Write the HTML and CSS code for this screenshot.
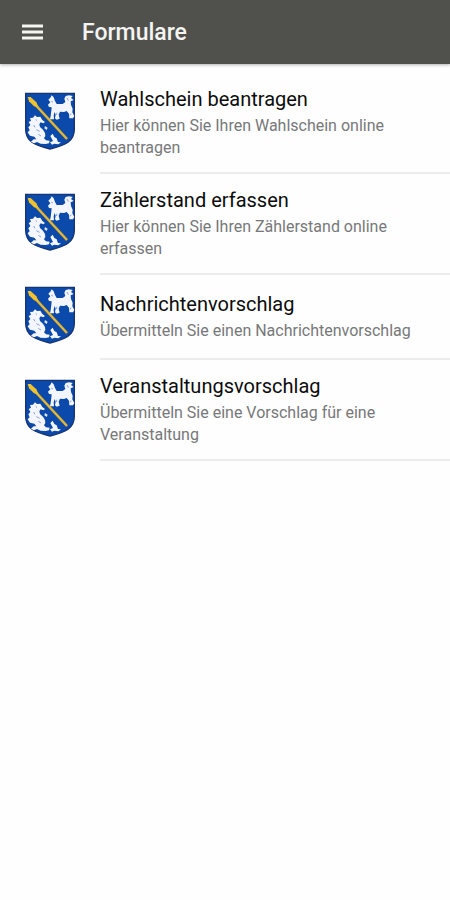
FILE: index.html
```html
<!DOCTYPE html>
<html lang="de">
<head>
    <meta charset="UTF-8">
    <meta name="viewport" content="width=device-width, initial-scale=1.0">
    <title>Formulare</title>
    <link rel="stylesheet" href="styles.css">
</head>
<body>
    <svg class="sprite" aria-hidden="true">
        <symbol id="wappen" viewBox="0 0 150 174">
            <path d="M2 4H148V112C148 148 122 160 75 171C28 160 2 148 2 112Z" fill="#0b49ab" stroke="#173573" stroke-width="4"/>
            <path d="M18 24L126 141" stroke="#5a6a62" stroke-width="9"/>
            <path d="M18 24L126 141" stroke="#e3b93c" stroke-width="6"/>
            <path d="M8 15L17 15L34 31L41 46L27 43L12 28Z" fill="#f0c22e"/>
            <!-- Hund -->
            <path d="M76 17L80 10L86 16L90 27L95 36L113 36L121 30L118 20L122 12L132 10L143 12L138 18L146 24L137 28L138 39L143 50L142 61L148 72L144 79L133 79L132 65L125 57L117 60L105 59L101 68L104 80L95 83L90 79L92 68L89 60L86 70L87 82L75 82L77 72L79 56L80 46L72 45L69 38L76 31L70 23Z" fill="#f3f5ff"/>
            <path d="M79 28L84 30M126 18L130 26M96 62L94 69M138 65L136 70" stroke="#8ba4da" stroke-width="3"/>
            <!-- Seepferd -->
            <path d="M15 78L24 77L30 70L36 75L46 74L52 84L60 90L55 94L47 91L43 97L45 105L54 113L60 123L61 132L57 139L63 145L74 146L72 154L62 156L47 155L36 150L27 154L18 149L26 142L34 142L28 134L15 131L8 121L14 115L10 106L16 99L11 90L18 86Z" fill="#f3f5ff"/>
            <path d="M76 132L83 125L88 135L95 139L99 150L108 151L100 157L88 155L81 158L75 151L84 147Z" fill="#f3f5ff"/>
            <path d="M60 102L68 107L65 114L58 109Z" fill="#dfe6fa"/>
            <path d="M32 82L36 86M26 99L30 106M34 113L44 118M40 127L48 132" fill="none" stroke="#8ba4da" stroke-width="3"/>
        </symbol>
    </svg>

    <header class="toolbar">
        <button class="menu-btn" type="button" aria-label="Menü">
            <svg viewBox="0 0 22 16" width="22" height="16">
                <path d="M0 2H21M0 8H21M0 14H21" stroke="#f4f4f2" stroke-width="3"/>
            </svg>
        </button>
        <h1>Formulare</h1>
    </header>

    <main>
        <ul class="form-list">
            <li>
                <a class="form-item" href="#wahlschein">
                    <svg class="crest" aria-hidden="true"><use href="#wappen"/></svg>
                    <div class="form-text">
                        <h2>Wahlschein beantragen</h2>
                        <p>Hier können Sie Ihren Wahlschein online beantragen</p>
                    </div>
                </a>
            </li>
            <li>
                <a class="form-item" href="#zaehlerstand">
                    <svg class="crest" aria-hidden="true"><use href="#wappen"/></svg>
                    <div class="form-text">
                        <h2>Zählerstand erfassen</h2>
                        <p>Hier können Sie Ihren Zählerstand online erfassen</p>
                    </div>
                </a>
            </li>
            <li>
                <a class="form-item" href="#nachricht">
                    <svg class="crest" aria-hidden="true"><use href="#wappen"/></svg>
                    <div class="form-text">
                        <h2>Nachrichtenvorschlag</h2>
                        <p>Übermitteln Sie einen Nachrichtenvorschlag</p>
                    </div>
                </a>
            </li>
            <li>
                <a class="form-item" href="#veranstaltung">
                    <svg class="crest" aria-hidden="true"><use href="#wappen"/></svg>
                    <div class="form-text">
                        <h2>Veranstaltungsvorschlag</h2>
                        <p>Übermitteln Sie eine Vorschlag für eine Veranstaltung</p>
                    </div>
                </a>
            </li>
        </ul>
    </main>
</body>
</html>
```
FILE: styles.css
```css
* {
    margin: 0;
    padding: 0;
    box-sizing: border-box;
}

body {
    font-family: Roboto, "Liberation Sans", sans-serif;
    background: #fefefe;
    color: #0c0c0c;
}

.sprite {
    display: none;
}

.toolbar {
    display: flex;
    align-items: center;
    gap: 38px;
    height: 64px;
    padding: 0 22px;
    background: #50514d;
    box-shadow: 0 1px 3px rgba(0, 0, 0, 0.3);
}

.toolbar h1 {
    padding-top: 2px;
    color: #f4f4f2;
    font-size: 23px;
    font-weight: 500;
    line-height: 28px;
}

.menu-btn {
    display: flex;
    background: none;
    border: none;
    cursor: pointer;
}

.form-list {
    list-style: none;
    padding-top: 9px;
}

.form-item {
    display: flex;
    align-items: stretch;
    padding-left: 25px;
    gap: 25px;
    color: inherit;
    text-decoration: none;
}

.crest {
    flex: none;
    align-self: center;
    width: 50px;
    height: 58px;
    margin-bottom: 5px;
}

.form-text {
    flex: 1;
    display: flex;
    flex-direction: column;
    justify-content: center;
    min-height: 85px;
    padding: 12px 16px 13px 0;
    border-bottom: 2px solid #ececec;
}

.form-text h2 {
    font-size: 20px;
    font-weight: 400;
    line-height: 28px;
}

.form-text p {
    margin-top: 2px;
    color: #77787a;
    font-size: 16px;
    line-height: 22px;
}
```
